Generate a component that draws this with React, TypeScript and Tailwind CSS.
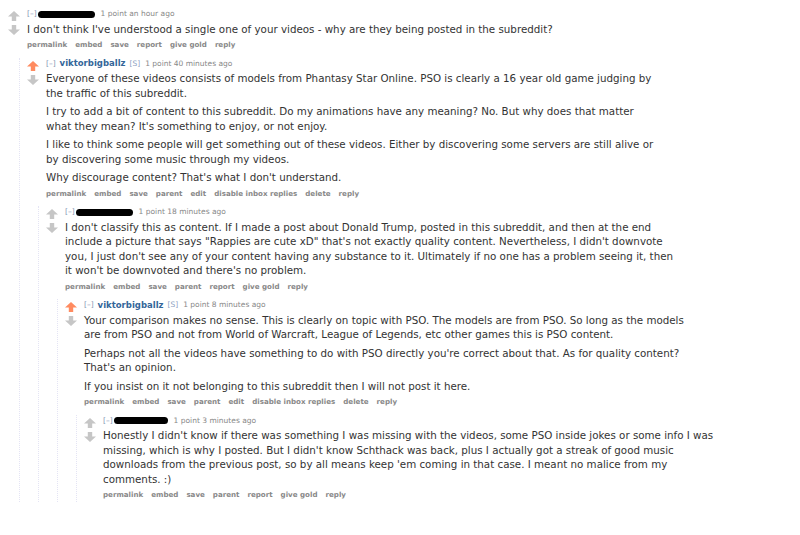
import React from "react";

type C = {
  author?: string;
  blob?: number;
  submitter?: boolean;
  upvoted?: boolean;
  time: string;
  paras: string[];
  buttons: string[];
  reply?: C;
};

const Arrow = ({ down, color }: { down?: boolean; color: string }) => (
  <svg width="12" height="10" viewBox="0 0 12 10" className={down ? "rotate-180" : ""}>
    <path d="M6 0 L12 5.5 L8.2 5.5 L8.2 10 L3.8 10 L3.8 5.5 L0 5.5 Z" fill={color} />
  </svg>
);

const thread: C = {
  blob: 57,
  time: "1 point an hour ago",
  paras: [
    "I don't think I've understood a single one of your videos - why are they being posted in the subreddit?",
  ],
  buttons: ["permalink", "embed", "save", "report", "give gold", "reply"],
  reply: {
    author: "viktorbigballz",
    submitter: true,
    upvoted: true,
    time: "1 point 40 minutes ago",
    paras: [
      "Everyone of these videos consists of models from Phantasy Star Online. PSO is clearly a 16 year old game judging by the traffic of this subreddit.",
      "I try to add a bit of content to this subreddit. Do my animations have any meaning? No. But why does that matter what they mean? It's something to enjoy, or not enjoy.",
      "I like to think some people will get something out of these videos. Either by discovering some servers are still alive or by discovering some music through my videos.",
      "Why discourage content? That's what I don't understand.",
    ],
    buttons: ["permalink", "embed", "save", "parent", "edit", "disable inbox replies", "delete", "reply"],
    reply: {
      blob: 57,
      time: "1 point 18 minutes ago",
      paras: [
        "I don't classify this as content. If I made a post about Donald Trump, posted in this subreddit, and then at the end include a picture that says \"Rappies are cute xD\" that's not exactly quality content. Nevertheless, I didn't downvote you, I just don't see any of your content having any substance to it. Ultimately if no one has a problem seeing it, then it won't be downvoted and there's no problem.",
      ],
      buttons: ["permalink", "embed", "save", "parent", "report", "give gold", "reply"],
      reply: {
        author: "viktorbigballz",
        submitter: true,
        upvoted: true,
        time: "1 point 8 minutes ago",
        paras: [
          "Your comparison makes no sense. This is clearly on topic with PSO. The models are from PSO. So long as the models are from PSO and not from World of Warcraft, League of Legends, etc other games this is PSO content.",
          "Perhaps not all the videos have something to do with PSO directly you're correct about that. As for quality content? That's an opinion.",
          "If you insist on it not belonging to this subreddit then I will not post it here.",
        ],
        buttons: ["permalink", "embed", "save", "parent", "edit", "disable inbox replies", "delete", "reply"],
        reply: {
          blob: 54,
          time: "1 point 3 minutes ago",
          paras: [
            "Honestly I didn't know if there was something I was missing with the videos, some PSO inside jokes or some info I was missing, which is why I posted. But I didn't know Schthack was back, plus I actually got a streak of good music downloads from the previous post, so by all means keep 'em coming in that case. I meant no malice from my comments. :)",
          ],
          buttons: ["permalink", "embed", "save", "parent", "report", "give gold", "reply"],
        },
      },
    },
  },
};

const Comment = ({ c }: { c: C }) => (
  <div className="flex flex-col">
    <div className="flex">
      <div className="w-[12px] mr-[7px] flex flex-col gap-[4px] pt-[3px]">
        <Arrow color={c.upvoted ? "#ff8b60" : "#c6c6c6"} />
        <Arrow down color="#c6c6c6" />
      </div>
      <div className="flex flex-col">
        <div className="flex items-center h-[12px] text-[7.5px] text-[#888]">
          <span className="text-[#8496b4] mr-[4px]">[–]</span>
          {c.author ? (
            <span className="font-bold text-[8.5px] text-[#336699] mr-[4px]">{c.author}</span>
          ) : (
            <span
              className="h-[7px] bg-black rounded-full mr-[6px] -ml-[3px]"
              style={{ width: c.blob }}
            />
          )}
          {c.submitter && <span className="text-[#8ca0c0] mr-[5px]">[S]</span>}
          <span>{c.time}</span>
        </div>
        <div className="max-w-[614px] mt-[1.5px] flex flex-col gap-[4px] text-[10.3px] leading-[14.5px] text-[#333]">
          {c.paras.map((p, i) => (
            <p key={i}>{p}</p>
          ))}
        </div>
        <div className="flex gap-[8px] mt-[3.5px] h-[12px] items-center text-[7.1px] font-bold text-[#888]">
          {c.buttons.map((b) => (
            <span key={b}>{b}</span>
          ))}
        </div>
      </div>
    </div>
    {c.reply && (
      <div className="ml-[11px] border-l border-dotted border-[#e4e4f4] pl-[7px] mt-[6px]">
        <Comment c={c.reply} />
      </div>
    )}
  </div>
);

export default function App() {
  return (
    <div
      className="w-[800px] h-[535px] bg-white pt-[8px] pl-[8px] overflow-hidden"
      style={{ fontFamily: "'DejaVu Sans', Verdana, sans-serif" }}
    >
      <Comment c={thread} />
    </div>
  );
}
